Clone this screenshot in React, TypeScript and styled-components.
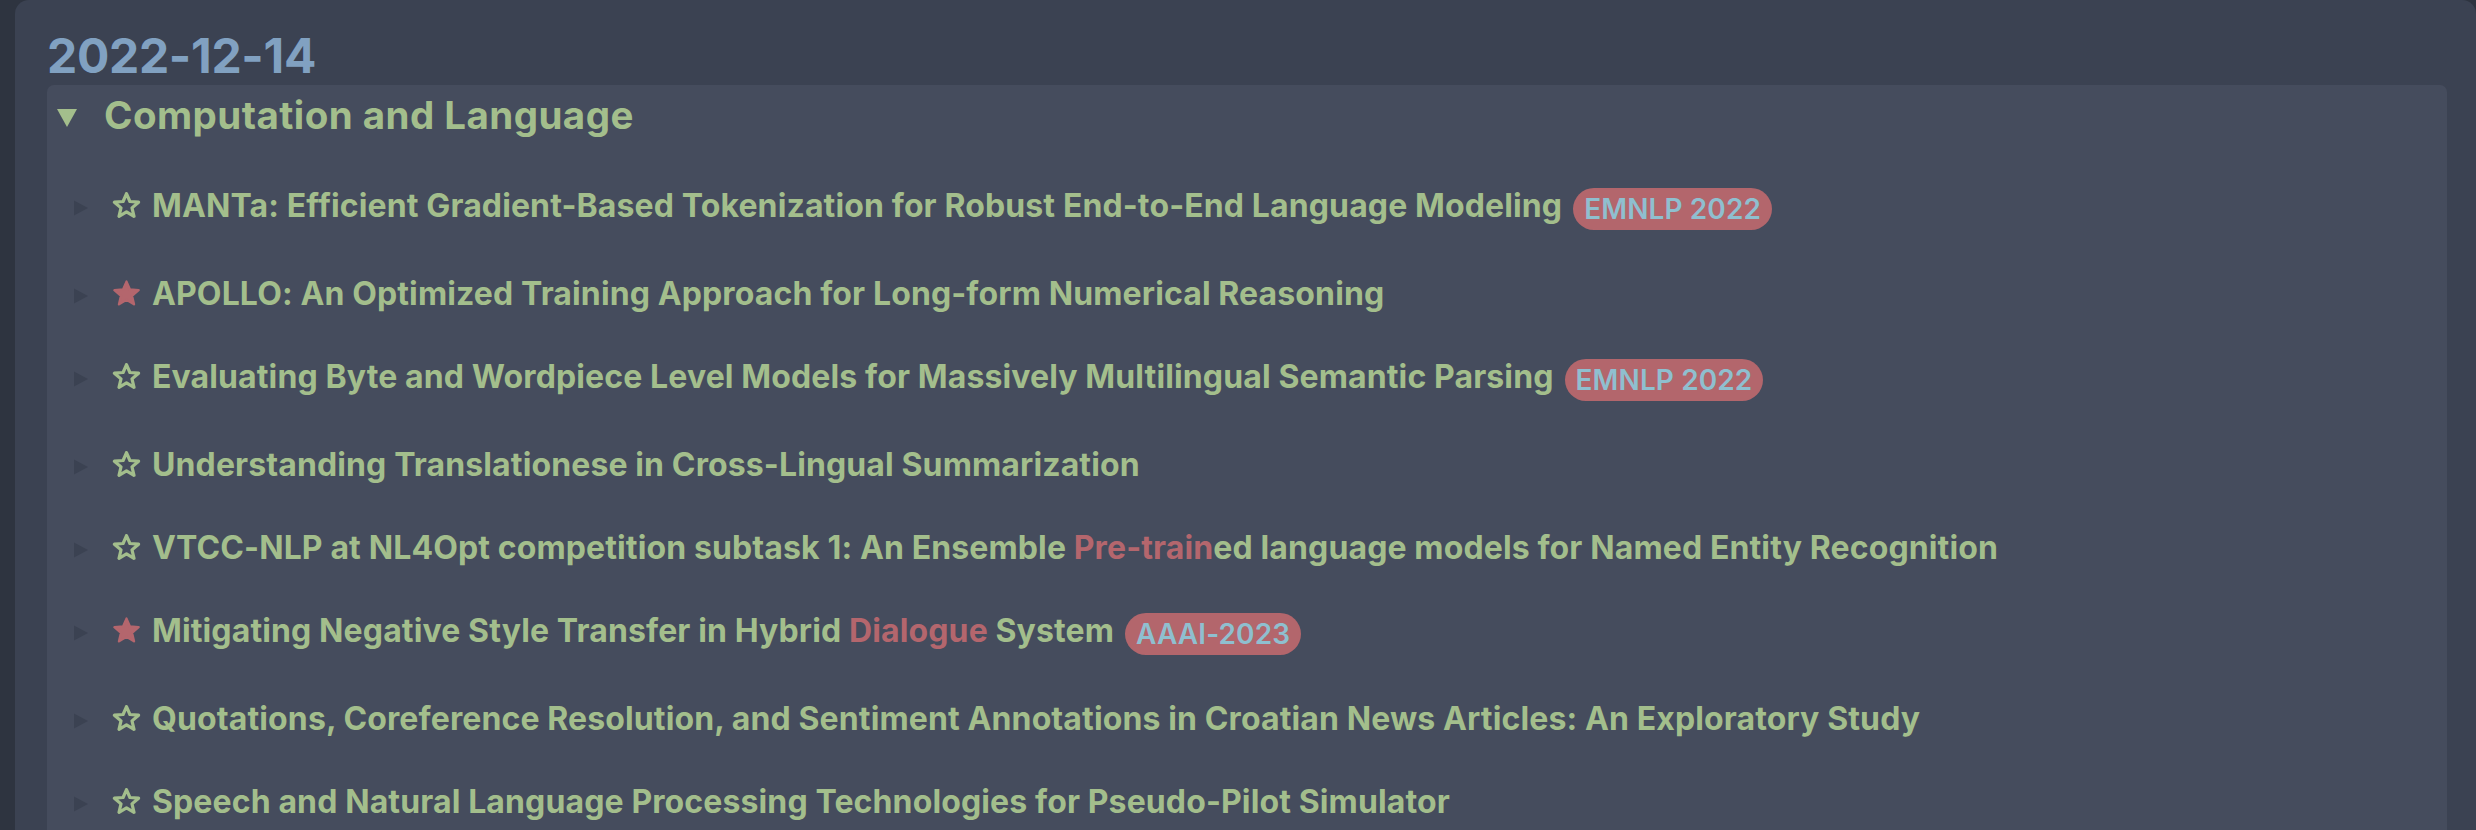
import React from "react";
import styled, { createGlobalStyle } from "styled-components";

const Global = createGlobalStyle`
  html, body { margin: 0; padding: 0; background: #2e3440; overflow: hidden; }
  body { font-family: Inter, "Noto Sans", sans-serif; }
`;

const Page = styled.div`
  padding-left: 15px;
  min-height: 830px;
`;

const DayCard = styled.section`
  background: #3b4252;
  border-radius: 14px 14px 0 0;
  padding: 27px 29px 0 32px;
  min-height: 803px;
`;

const DateTitle = styled.h2`
  margin: 0;
  font-size: 48px;
  line-height: 58px;
  font-weight: 700;
  color: #81a1c1;
  letter-spacing: -0.3px;
`;

const CategoryCard = styled.div`
  background: #454c5d;
  border-radius: 7px 7px 0 0;
  padding: 8px 0 0 9px;
  min-height: 745px;
`;

const CategoryHeader = styled.div`
  display: flex;
  align-items: flex-start;
  gap: 26px;
  font-size: 38.5px;
  line-height: 45px;
  font-weight: 700;
  color: #a3be8c;
  letter-spacing: 0.45px;
  margin-bottom: 26px;
`;

const Caret = styled.svg<{ $top: number }>`
  flex: none;
  margin-top: ${(p) => p.$top}px;
`;

const PaperList = styled.div`
  display: flex;
  flex-direction: column;
  padding-left: 17px;
`;

const PaperRow = styled.div`
  display: flex;
  align-items: flex-start;
  padding: 22.5px 0;
`;

const StarIcon = styled.svg`
  flex: none;
  margin-left: 23px;
  margin-top: 5px;
  margin-right: 11px;
`;

const Title = styled.div`
  font-size: 32px;
  line-height: 38px;
  font-weight: 700;
  color: #a3be8c;
  letter-spacing: 0.12px;
  white-space: nowrap;
`;

const Hit = styled.span`
  color: #b4666d;
`;

const Badge = styled.span`
  display: inline-block;
  margin-left: 11px;
  padding: 4px 11px;
  border-radius: 22px;
  background: #b3666c;
  color: #8fbfcf;
  font-size: 28px;
  line-height: 34px;
  font-weight: 600;
  letter-spacing: 0.1px;
  vertical-align: -2px;
`;

type Paper = {
  starred: boolean;
  parts: (string | { hit: string })[];
  badge?: string;
};

const papers: Paper[] = [
  {
    starred: false,
    parts: ["MANTa: Efficient Gradient-Based Tokenization for Robust End-to-End Language Modeling"],
    badge: "EMNLP 2022",
  },
  {
    starred: true,
    parts: ["APOLLO: An Optimized Training Approach for Long-form Numerical Reasoning"],
  },
  {
    starred: false,
    parts: ["Evaluating Byte and Wordpiece Level Models for Massively Multilingual Semantic Parsing"],
    badge: "EMNLP 2022",
  },
  {
    starred: false,
    parts: ["Understanding Translationese in Cross-Lingual Summarization"],
  },
  {
    starred: false,
    parts: [
      "VTCC-NLP at NL4Opt competition subtask 1: An Ensemble ",
      { hit: "Pre-train" },
      "ed language models for Named Entity Recognition",
    ],
  },
  {
    starred: true,
    parts: ["Mitigating Negative Style Transfer in Hybrid ", { hit: "Dialogue" }, " System"],
    badge: "AAAI-2023",
  },
  {
    starred: false,
    parts: [
      "Quotations, Coreference Resolution, and Sentiment Annotations in Croatian News Articles: An Exploratory Study",
    ],
  },
  {
    starred: false,
    parts: ["Speech and Natural Language Processing Technologies for Pseudo-Pilot Simulator"],
  },
];

const STAR =
  "M14.5 1.6 L17.9 9.5 L26.6 10.2 L20.0 15.9 L22.0 24.3 L14.5 19.8 L7.0 24.3 L9.0 15.9 L2.4 10.2 L11.1 9.5 Z";

const Star = ({ filled }: { filled: boolean }) => (
  <StarIcon width="29" height="27" viewBox="0 0 29 27">
    <path
      d={STAR}
      fill={filled ? "#b4666d" : "none"}
      stroke={filled ? "#b4666d" : "#a3be8c"}
      strokeWidth={filled ? 2.4 : 3.2}
      strokeLinejoin="round"
    />
  </StarIcon>
);

export default function App() {
  return (
    <>
      <Global />
      <Page>
        <DayCard>
          <DateTitle>2022-12-14</DateTitle>
          <CategoryCard>
            <CategoryHeader>
              <Caret $top={15} width="22" height="20" viewBox="0 0 22 20">
                <polygon points="1,1 21,1 11,19" fill="#a3be8c" />
              </Caret>
              <span>Computation and Language</span>
            </CategoryHeader>
            <PaperList>
              {papers.map((p, i) => (
                <PaperRow key={i}>
                  <Caret $top={13} width="16" height="16" viewBox="0 0 16 16">
                    <polygon points="1,0.5 15,8 1,15.5" fill="#3b4252" />
                  </Caret>
                  <Star filled={p.starred} />
                  <Title>
                    {p.parts.map((part, j) =>
                      typeof part === "string" ? (
                        <React.Fragment key={j}>{part}</React.Fragment>
                      ) : (
                        <Hit key={j}>{part.hit}</Hit>
                      )
                    )}
                    {p.badge && <Badge>{p.badge}</Badge>}
                  </Title>
                </PaperRow>
              ))}
            </PaperList>
          </CategoryCard>
        </DayCard>
      </Page>
    </>
  );
}
